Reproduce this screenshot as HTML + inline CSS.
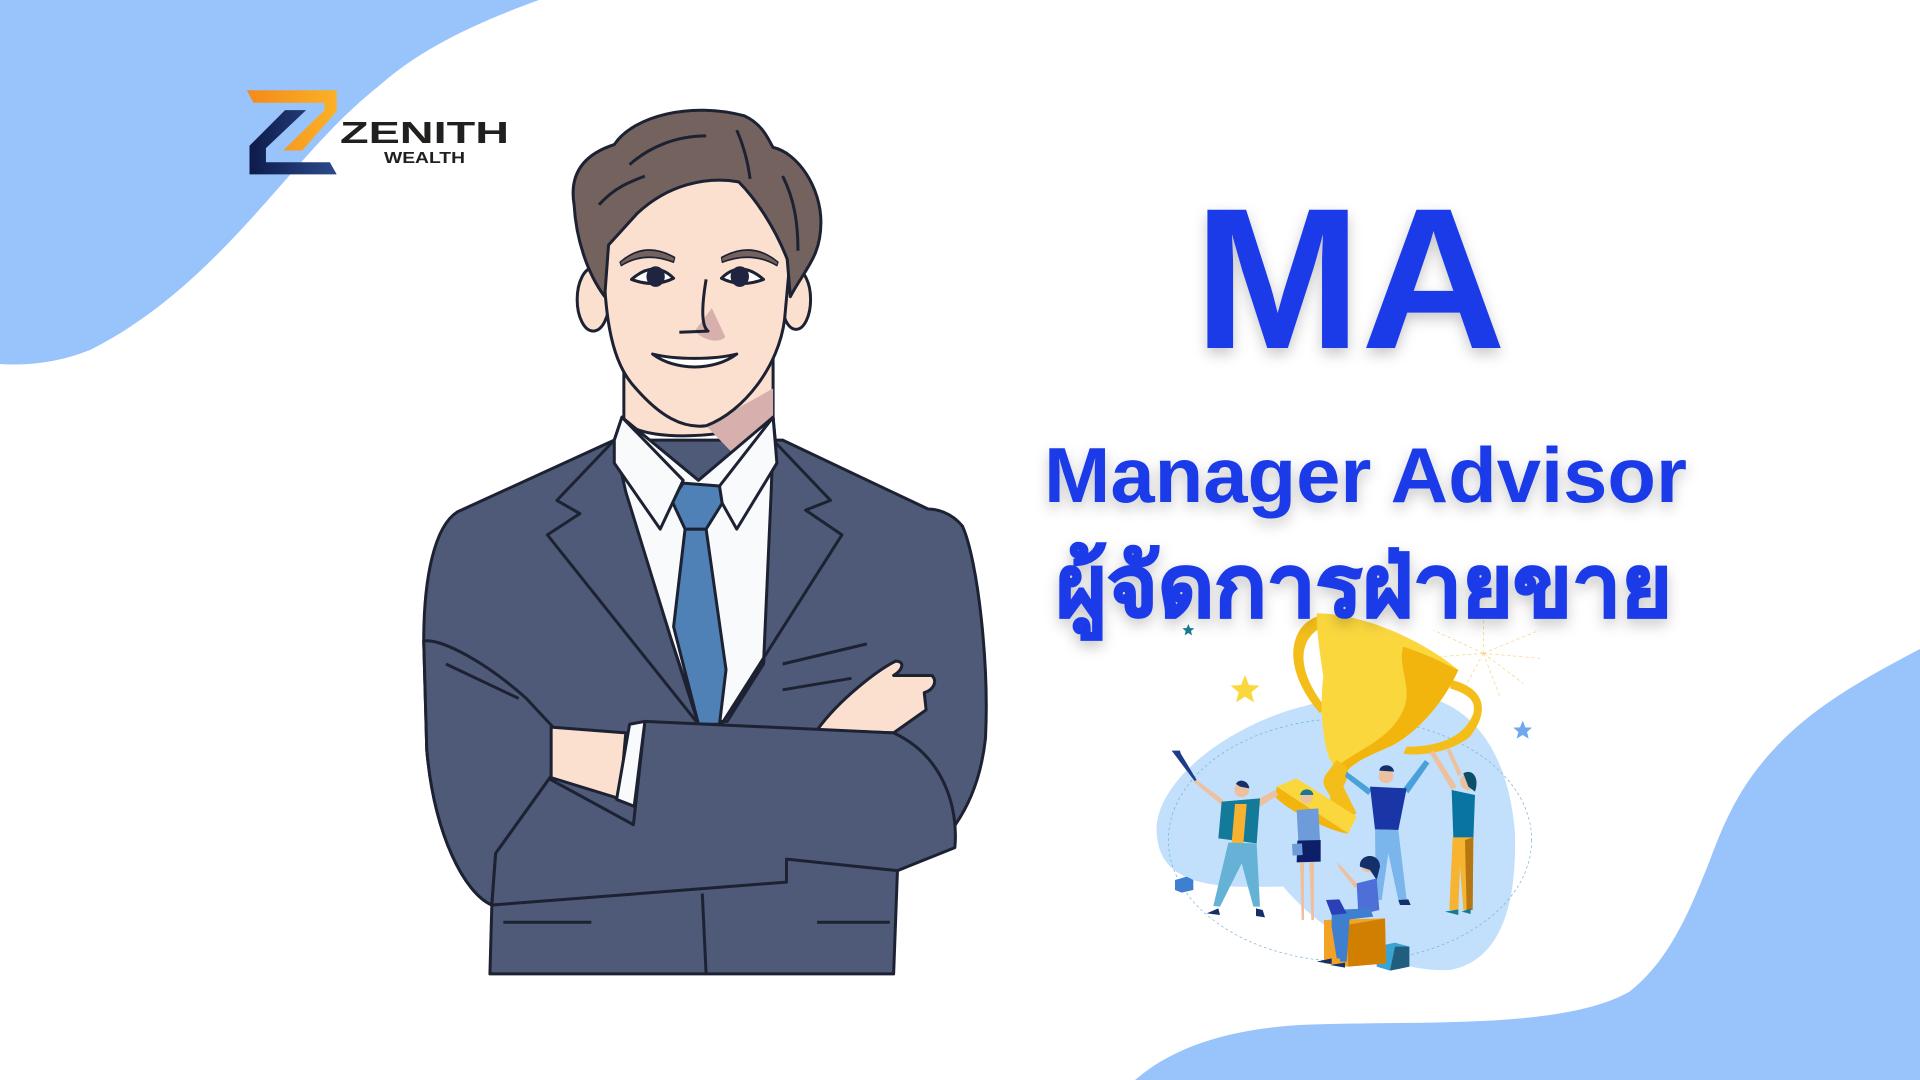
<!DOCTYPE html>
<html><head><meta charset="utf-8"><style>
html,body{margin:0;padding:0;width:1920px;height:1080px;overflow:hidden;background:#fff}
svg{position:absolute;overflow:visible}
</style></head><body>
<svg style="left:0;top:0" width="1920" height="1080" viewBox="0 0 1920 1080">
<path d="M0 0 L539 0 C470 25 420 50 380 85 C330 125 300 165 250 220 C200 275 150 320 90 350 C60 362 30 366 0 364 Z" fill="#99C4FB"/>
<path d="M1920 649 C1860 680 1810 710 1776 747 C1740 785 1725 820 1710 860 C1690 910 1670 960 1629 992 C1560 1030 1420 1020 1300 1025 C1220 1030 1170 1050 1135 1080 L1920 1080 Z" fill="#99C4FB"/>
</svg>

<svg style="left:0;top:0" width="600" height="400" viewBox="0 0 1568 1188" preserveAspectRatio="none">
<defs>
<linearGradient id="og" x1="0" x2="1"><stop offset="0" stop-color="#F38A1D"/><stop offset="1" stop-color="#FBB125"/></linearGradient>
<linearGradient id="ng" x1="0" x2="1"><stop offset="0" stop-color="#0E1B4A"/><stop offset="1" stop-color="#2B4C8C"/></linearGradient>
</defs>
<path d="M645 268 L880 268 L880 330 L790 447 L740 447 L848 327 L848 305 L662 305 Z" fill="url(#og)"/>
<path d="M745 327 L800 327 L695 440 L695 482 L862 482 L880 518 L652 518 L652 433 Z" fill="url(#ng)"/>
</svg>
<svg style="left:0;top:0" width="600" height="200" viewBox="0 0 600 200">
<text x="340" y="143" font-family="Liberation Sans, sans-serif" font-weight="bold" font-size="31" fill="#221f1f" textLength="169" lengthAdjust="spacingAndGlyphs">ZENITH</text>
<text x="384" y="163" font-family="Liberation Sans, sans-serif" font-weight="bold" font-size="16" fill="#221f1f" textLength="81" lengthAdjust="spacingAndGlyphs">WEALTH</text>
</svg>

<svg style="left:400px;top:90px" width="600" height="900" viewBox="0 0 1568 1568" preserveAspectRatio="none">
<g stroke="#1d2233" stroke-width="3" stroke-linejoin="round">
<path vector-effect="non-scaling-stroke" d="M150 735 C90 760 62 850 62 960 L70 1150 C90 1300 170 1400 240 1420 L235 1540 L1290 1540 L1300 1360 C1420 1330 1510 1250 1530 1130 C1540 1000 1510 820 1470 760 C1440 735 1400 730 1380 730 L1000 610 L560 610 Z" fill="#4E5A78"/>
<path vector-effect="non-scaling-stroke" d="M585 480 L585 580 C650 610 800 610 975 580 L975 460 Z" fill="#FBE0D0"/>
<path d="M800 585 L975 520 L975 600 L880 640 Z" fill="#D7AFAD" stroke="none"/>
<path vector-effect="non-scaling-stroke" d="M560 610 L580 570 L780 680 L975 570 L985 640 L950 1000 L855 1100 L780 1100 L710 960 L560 640 Z" fill="#F8FAFC"/>
<path d="M880 650 L975 575 L982 640 L940 700 Z" fill="#C4CEEA" stroke="none"/>
<path vector-effect="non-scaling-stroke" d="M560 610 L410 715 L470 738 L385 775 L780 1105 L710 960 L590 700 Z" fill="#4E5A78"/>
<path vector-effect="non-scaling-stroke" d="M975 610 L1125 715 L1060 732 L1155 775 L840 1105 L950 1000 L970 700 Z" fill="#4E5A78"/>
<path vector-effect="non-scaling-stroke" d="M745 765 L800 765 L852 1010 L835 1105 L780 1105 L715 935 Z" fill="#4F80B6"/>
<path vector-effect="non-scaling-stroke" d="M710 715 L740 685 L835 690 L842 720 L800 765 L745 765 Z" fill="#4F80B6"/>
<path vector-effect="non-scaling-stroke" d="M560 610 L580 570 L740 680 L680 765 L560 650 Z" fill="#F8FAFC"/>
<path vector-effect="non-scaling-stroke" d="M975 570 L985 650 L880 765 L842 720 L835 690 Z" fill="#F8FAFC"/>
<path vector-effect="non-scaling-stroke" d="M62 960 C110 955 230 1000 330 1060 L400 1110 L395 1195 L250 1330 L240 1420 C170 1400 90 1300 70 1150 Z" fill="#4E5A78"/>
<path vector-effect="non-scaling-stroke" d="M395 1110 L590 1120 L575 1235 L395 1198 Z" fill="#FBE0D0"/>
<path vector-effect="non-scaling-stroke" d="M1090 1115 C1150 1060 1250 1010 1295 995 C1320 995 1315 1010 1290 1020 L1390 1020 C1405 1030 1395 1045 1370 1050 L1375 1080 L1290 1120 Z" fill="#FBE0D0"/>
<path vector-effect="non-scaling-stroke" d="M640 1100 L1290 1120 C1420 1160 1460 1250 1450 1320 L1300 1360 L1010 1340 L1010 1380 L240 1420 L250 1330 L390 1200 L610 1280 Z" fill="#4E5A78"/>
<path vector-effect="non-scaling-stroke" d="M600 1105 L640 1100 L612 1248 L566 1236 Z" fill="#F8FAFC"/>
<path vector-effect="non-scaling-stroke" d="M790 1400 L800 1540 M270 1450 L500 1450 M1090 1450 L1280 1450 M120 1000 L310 1060 M1000 1000 L1220 965 M1000 1045 L1180 1025" fill="none"/>
<ellipse vector-effect="non-scaling-stroke" cx="505" cy="365" rx="42" ry="55" fill="#FBE0D0"/>
<ellipse vector-effect="non-scaling-stroke" cx="1035" cy="365" rx="38" ry="52" fill="#FBE0D0"/>
<path vector-effect="non-scaling-stroke" d="M530 230 C530 390 550 470 610 515 C680 570 740 590 800 585 C900 560 990 480 1005 400 L1020 290 L1010 110 L560 110 Z" fill="#FBE0D0"/>
<path d="M770 420 C800 440 840 440 850 430 L815 380 Z" fill="#D7AFAD" stroke="none"/>
<path vector-effect="non-scaling-stroke" d="M455 200 C440 140 490 110 560 95 C610 45 760 20 900 45 C950 60 965 90 975 100 C1040 110 1100 170 1100 230 C1100 290 1060 310 1020 360 L1012 295 C980 240 930 190 885 160 C800 150 700 165 620 215 L545 270 L535 360 C490 320 460 260 455 200 Z" fill="#74625F"/>
<path vector-effect="non-scaling-stroke" d="M600 130 C650 100 720 80 800 80 M880 70 C900 100 910 130 915 155 M1000 150 C1030 190 1040 230 1040 280 M520 200 C560 170 600 160 640 150" fill="none"/>
<path d="M575 300 Q640 262 718 292 L715 300 Q640 280 578 306 Z" fill="#74625F"/>
<path d="M840 292 Q920 262 988 300 L985 306 Q920 280 842 300 Z" fill="#74625F"/>
<path vector-effect="non-scaling-stroke" d="M605 330 Q665 295 715 328 Q665 345 605 330 Z" fill="#fff"/>
<path vector-effect="non-scaling-stroke" d="M840 328 Q890 295 950 330 Q890 345 840 328 Z" fill="#fff"/>
<ellipse cx="668" cy="325" rx="24" ry="18" fill="#1f2540" stroke="none"/>
<ellipse cx="888" cy="325" rx="24" ry="18" fill="#1f2540" stroke="none"/>
<path vector-effect="non-scaling-stroke" d="M800 330 C790 370 785 410 805 420 L730 422" fill="none"/>
<path vector-effect="non-scaling-stroke" d="M660 460 C720 490 820 490 880 460 C820 470 720 470 660 460 Z" fill="#fff"/>
</g>
</svg>

<svg style="left:1150px;top:600px" width="420" height="380" viewBox="0 0 1260 1140">
<path d="M20 700 C10 560 200 400 420 330 C560 290 700 260 860 300 C1000 350 1080 500 1095 700 C1100 900 1060 1080 900 1110 C700 1120 500 980 400 860 C250 860 30 880 20 700 Z" fill="#C2E0FC"/>
<ellipse cx="600" cy="720" rx="545" ry="365" fill="none" stroke="#6FB0D8" stroke-width="2" stroke-dasharray="8 8"/>
<g stroke="#F7D27A" stroke-width="2" stroke-dasharray="10 8">
<path d="M1000 160 L850 90 M1000 160 L1170 90 M1000 160 L1170 175 M1000 160 L1050 290 M1000 160 L940 270 M1000 160 L870 170 M1000 160 L1000 50 M1000 160 L1120 250"/>
</g>
<path d="M500 50 C420 80 390 200 510 340 L525 320 C430 200 450 110 520 80 Z" fill="#F4BE1A"/>
<path d="M905 240 C990 260 1030 320 960 410 C900 460 800 470 760 460 L770 440 C850 440 940 420 970 340 C980 300 950 280 900 265 Z" fill="#F4BE1A"/>
<path d="M500 40 C650 40 830 130 925 210 C880 310 800 400 720 440 C650 470 600 490 580 530 L540 480 C515 420 510 300 520 230 C510 160 500 100 500 40 Z" fill="#FBD73E"/>
<path d="M760 140 C850 170 900 200 925 210 C880 310 800 400 720 440 C650 470 600 490 580 530 L560 500 C620 450 720 420 760 330 C790 260 740 200 760 140 Z" fill="#F2B50E"/>
<path d="M560 480 L530 520 C500 560 550 580 540 600 L600 650 L620 640 L580 560 C590 540 600 520 590 500 Z" fill="#F4BE1A"/>
<path d="M380 560 L440 535 L620 650 L595 700 Z" fill="#FBD73E"/>
<path d="M380 560 L595 700 L590 700 C560 700 420 640 375 590 Z" fill="#F2B50E"/>
<polygon points="285,225 297,255 328,257 304,277 312,307 285,290 258,307 266,277 242,257 273,255" fill="#FBD73E"/>
<polygon points="1118,362 1126,382 1146,383 1131,396 1136,416 1118,405 1100,416 1105,396 1090,383 1110,382" fill="#6FA8EF"/>
<polygon points="115,72 120,84 133,85 123,93 126,106 115,99 104,106 107,93 97,85 110,84" fill="#197A8F"/>
<path d="M75 840 L110 830 L130 840 L130 870 L95 878 L75 870 Z" fill="#3E7FCF"/>
<path d="M680 1040 L735 1028 L778 1040 L778 1100 L720 1112 L680 1100 Z" fill="#3BA3D3"/>
<path d="M735 1040 L778 1040 L778 1100 L720 1112 Z" fill="#215E7E"/>
<g>
<path d="M65 452 L90 452 L92 460 L140 540 L135 545 Z" fill="#1E3B8C"/>
<path d="M140 540 L220 600 L215 615 L130 545 Z" fill="#EDC0A0"/>
<path d="M320 600 L375 570 L385 585 L330 620 Z" fill="#EDC0A0"/>
<circle cx="275" cy="570" r="22" fill="#EDC0A0"/>
<path d="M258 552 C265 535 295 540 298 565 L270 560 Z" fill="#14306B"/>
<path d="M215 605 L330 595 L320 730 L205 715 Z" fill="#147A9A"/>
<path d="M255 612 L290 612 L280 730 L245 728 Z" fill="#F8B230"/>
<path d="M235 728 L320 730 L330 920 L310 920 L275 790 L210 920 L190 918 Z" fill="#66B2D6"/>
<path d="M170 940 L205 925 L210 945 Z M318 925 L338 930 L345 952 L318 948 Z" fill="#14306B"/>
</g>
<g>
<circle cx="470" cy="593" r="18" fill="#EDC0A0"/>
<path d="M450 585 C455 560 490 565 490 585 Z" fill="#197A8F"/>
<path d="M440 630 L505 625 L510 720 L445 725 Z" fill="#6E9BDA"/>
<path d="M442 722 L512 720 L512 785 L440 787 Z" fill="#0E1F69"/>
<path d="M450 787 L462 787 L462 960 L455 960 Z M478 787 L492 787 L492 960 L484 960 Z" fill="#EDC0A0"/>
<path d="M426 732 L456 730 L458 765 L428 767 Z" fill="#6E9BDA"/>
</g>
<g>
<path d="M590 515 L665 570 L655 585 L585 530 Z" fill="#4AA0D8"/>
<path d="M760 565 L825 480 L838 490 L775 580 Z" fill="#4AA0D8"/>
<circle cx="708" cy="528" r="22" fill="#EDC0A0"/>
<path d="M688 512 C690 490 730 490 732 515 Z" fill="#14306B"/>
<path d="M660 560 L770 565 L745 690 L675 688 Z" fill="#1A35A5"/>
<path d="M675 688 L745 690 L770 900 L745 900 L715 760 L695 900 L678 900 Z" fill="#7AB6EC"/>
<path d="M745 900 L775 898 L782 915 L750 915 Z" fill="#14306B"/>
</g>
<g>
<path d="M840 460 L850 450 L920 560 L905 570 Z M890 450 L900 445 L935 520 L925 530 Z" fill="#EDC0A0"/>
<circle cx="955" cy="545" r="25" fill="#EDC0A0"/>
<path d="M940 520 C965 505 990 530 975 575 L955 560 Z" fill="#0B4E6A"/>
<path d="M905 570 L975 585 L970 720 L910 715 Z" fill="#0A74A0"/>
<path d="M908 712 L970 712 L968 930 L940 930 L930 800 L925 930 L898 930 Z" fill="#F6B431"/>
<path d="M945 720 L970 712 L968 930 L950 930 Z" fill="#B67612"/>
<path d="M885 935 L925 928 L925 945 Z M935 935 L962 925 L962 942 Z" fill="#197A8F"/>
</g>
<g>
<path d="M560 785 L575 800 L625 855 L615 865 L568 805 Z" fill="#EDC0A0"/>
<circle cx="655" cy="795" r="22" fill="#EDC0A0"/>
<path d="M630 800 C625 760 690 755 690 800 L680 840 L660 810 Z" fill="#14306B"/>
<path d="M620 850 L680 835 L688 930 L625 945 Z" fill="#4F6FD8"/>
<path d="M522 960 L705 955 L708 1090 L590 1100 L522 1090 Z" fill="#F2A224"/>
<path d="M590 975 L705 955 L708 1090 L595 1100 Z" fill="#D17F00"/>
<path d="M545 930 L660 925 L670 950 L585 960 L580 1075 L560 1075 L545 980 Z M560 940 L600 935 L590 1085 L570 1085 Z" fill="#3E7FCF"/>
<path d="M528 900 L568 898 L590 940 L545 945 Z" fill="#2B3FB8"/>
<path d="M500 1085 L545 1075 L545 1092 Z M540 1095 L585 1088 L585 1103 Z" fill="#14306B"/>
</g>
</svg>

<svg style="left:0;top:0" width="1920" height="1080" viewBox="0 0 1920 1080">
<defs><filter id="sh" x="-10%" y="-20%" width="120%" height="150%"><feDropShadow dx="0" dy="6" stdDeviation="7" flood-color="#000" flood-opacity="0.22"/></filter></defs>
<g fill="#1B3AE8" filter="url(#sh)" font-family="Liberation Sans, 'DejaVu Sans', sans-serif" font-weight="bold">
<text x="1194" y="348" font-size="201" textLength="312" lengthAdjust="spacingAndGlyphs">MA</text>
<text x="1044" y="502" font-size="78" textLength="643" lengthAdjust="spacingAndGlyphs">Manager Advisor</text>
<text x="1056" y="616" font-size="86" textLength="616" lengthAdjust="spacingAndGlyphs" stroke="#1B3AE8" stroke-width="2">ผู้จัดการฝ่ายขาย</text>
</g>
</svg>
</body></html>
